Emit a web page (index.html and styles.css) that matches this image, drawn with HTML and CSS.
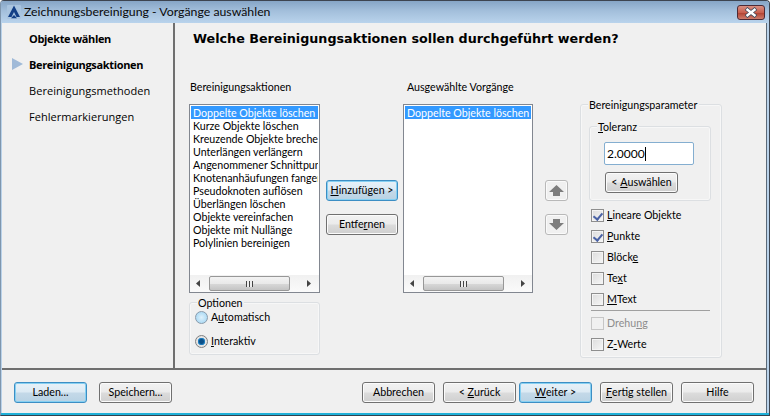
FILE: index.html
```html
<!DOCTYPE html>
<html lang="de">
<head>
<meta charset="utf-8">
<title>Zeichnungsbereinigung - Vorgänge auswählen</title>
<link rel="stylesheet" href="styles.css">
</head>
<body>
<div class="window">
  <header class="titlebar">
    <svg class="app-icon" width="16" height="16" viewBox="0 0 16 16"><rect x="1" y="1" width="14" height="14" rx="1" fill="#a9c4df"/><path d="M8 1.5 14 13H10.5L8 8 5.5 13H2Z" fill="#123f86"/><path d="M5 14.2H11L8 11Z" fill="#123f86"/></svg>
    <span class="title">Zeichnungsbereinigung - Vorgänge auswählen</span>
    <span class="close"><svg width="14" height="11" viewBox="0 0 14 11"><path d="M2 1.5 12 9.5M12 1.5 2 9.5" stroke="#3c4a5c" stroke-width="4"/><path d="M2.5 2 11.5 9M11.5 2 2.5 9" stroke="#fff" stroke-width="2.4"/></svg></span>
  </header>
  <div class="client">
    <div class="content">
      <nav class="nav">
        <div class="step strong">Objekte wählen</div>
        <div class="step strong"><svg class="marker" width="12" height="12" viewBox="0 0 12 12"><path d="M0 0 11 6 0 12Z" fill="#a0bad8"/></svg>Bereinigungsaktionen</div>
        <div class="step">Bereinigungsmethoden</div>
        <div class="step">Fehlermarkierungen</div>
      </nav>
      <main class="main">
        <h1 class="heading">Welche Bereinigungsaktionen sollen durchgeführt werden?</h1>
        <div class="columns">
          <section class="col col-list">
            <div class="col-label">Bereinigungsaktionen</div>
            <div class="listbox">
              <ul class="items">
                <li class="selected">Doppelte Objekte löschen</li>
                <li>Kurze Objekte löschen</li>
                <li>Kreuzende Objekte brechen</li>
                <li>Unterlängen verlängern</li>
                <li>Angenommener Schnittpunkt</li>
                <li>Knotenanhäufungen fangen</li>
                <li>Pseudoknoten auflösen</li>
                <li>Überlängen löschen</li>
                <li>Objekte vereinfachen</li>
                <li>Objekte mit Nullänge</li>
                <li>Polylinien bereinigen</li>
              </ul>
              <div class="hscroll">
                <svg class="arrow" width="5" height="7" viewBox="0 0 5 7"><path d="M4 0V7L0 3.5Z" fill="#444"/></svg>
                <div class="thumb"><span class="grip"></span></div>
                <svg class="arrow" width="5" height="7" viewBox="0 0 5 7"><path d="M1 0V7L5 3.5Z" fill="#444"/></svg>
              </div>
            </div>
            <div class="group options">
              <div class="legend">Optionen</div>
              <label class="radio-row"><span class="radio hot"></span><span class="opt-text">A<u>u</u>tomatisch</span></label>
              <label class="radio-row"><span class="radio on"></span><span class="opt-text"><u>I</u>nteraktiv</span></label>
            </div>
          </section>
          <section class="col col-actions">
            <button class="btn focus"><u>H</u>inzufügen &gt;</button>
            <button class="btn">Entfe<u>r</u>nen</button>
          </section>
          <section class="col col-list2">
            <div class="col-label">Ausgewählte Vorgänge</div>
            <div class="listbox">
              <ul class="items">
                <li class="selected">Doppelte Objekte löschen</li>
              </ul>
              <div class="hscroll">
                <svg class="arrow" width="5" height="7" viewBox="0 0 5 7"><path d="M4 0V7L0 3.5Z" fill="#444"/></svg>
                <div class="thumb"><span class="grip"></span></div>
                <svg class="arrow" width="5" height="7" viewBox="0 0 5 7"><path d="M1 0V7L5 3.5Z" fill="#444"/></svg>
              </div>
            </div>
          </section>
          <section class="col col-move">
            <button class="btn move"><svg width="15" height="11" viewBox="0 0 15 11"><path d="M7.5 0 15 7H11V11H4V7H0Z" fill="#7d7d7d"/></svg></button>
            <button class="btn move"><svg width="15" height="11" viewBox="0 0 15 11"><path d="M7.5 11 15 4H11V0H4V4H0Z" fill="#7d7d7d"/></svg></button>
          </section>
          <section class="col col-params">
            <div class="group params">
              <div class="legend">Bereinigungsparameter</div>
              <div class="group tolerance">
                <div class="legend"><u>T</u>oleranz</div>
                <div class="input"><span>2.0000</span><span class="caret"></span></div>
                <button class="btn pick">&lt; <u>A</u>uswählen</button>
              </div>
              <label class="check-row"><span class="check on"></span><span class="opt-text"><u>L</u>ineare Objekte</span></label>
              <label class="check-row"><span class="check on"></span><span class="opt-text"><u>P</u>unkte</span></label>
              <label class="check-row"><span class="check"></span><span class="opt-text">Blöck<u>e</u></span></label>
              <label class="check-row"><span class="check"></span><span class="opt-text">Te<u>x</u>t</span></label>
              <label class="check-row"><span class="check"></span><span class="opt-text"><u>M</u>Text</span></label>
              <div class="rule"></div>
              <label class="check-row disabled"><span class="check"></span><span class="opt-text">Drehu<u>n</u>g</span></label>
              <label class="check-row"><span class="check"></span><span class="opt-text">Z<u>-</u>Werte</span></label>
            </div>
          </section>
        </div>
      </main>
    </div>
    <footer class="footer">
      <div class="footer-group">
        <button class="btn focus">Laden...</button>
        <button class="btn">Speichern...</button>
      </div>
      <div class="footer-group end">
        <button class="btn">Abbrechen</button>
        <button class="btn">&lt; <u>Z</u>urück</button>
        <button class="btn focus tight"><u>W</u>eiter &gt;</button>
        <button class="btn"><u>F</u>ertig stellen</button>
        <button class="btn">Hilfe</button>
      </div>
    </footer>
  </div>
</div>
</body>
</html>
```
FILE: styles.css
```css
* { box-sizing: border-box; }
html, body { margin: 0; padding: 0; }
body { width: 770px; height: 416px; background: #fff; overflow: hidden; font: 10.66px/13px "Lato", "Liberation Sans", sans-serif; color: #000; }
u { text-decoration: underline; }
.window { width: 770px; height: 416px; display: flex; flex-direction: column; border: 1px solid #3d4450; border-left-color: #7f96ad; border-radius: 4px 4px 0 0; border-bottom-color: #30424f; background: #b9d2ea; overflow: hidden; box-shadow: inset 0 -2px 0 #1fb0d8; }
.titlebar { height: 22px; flex: none; display: flex; align-items: center; padding: 0 4px 0 5px; background: linear-gradient(#86a5c6, #a3bfdb 45%, #b9d3ec); }
.app-icon { flex: none; }
.title { margin-left: 2px; font: 12.3px/16px "Lato", sans-serif; color: #0a0a0a; }
.close { margin-left: auto; width: 28px; height: 15px; border: 1px solid #4e2a35; border-radius: 3px; display: flex; align-items: center; justify-content: center; background: linear-gradient(#d98f82, #c8604f 50%, #b24434 55%, #cf7d6c); }
.client { flex: 1; margin: 0 2px 2px 1px; background: #f0f0f0; display: flex; flex-direction: column; min-height: 0; border-right: 1px solid #5b6a78; }
.content { height: 347px; flex: none; display: flex; border-bottom: 2px solid #6f6f6f; }
.nav { width: 173px; flex: none; border-right: 2px solid #6f6f6f; padding-top: 2px; }
.step { height: 26px; padding-left: 27px; display: flex; align-items: center; font: 500 11px/13px "Open Sans", sans-serif; letter-spacing: 0.05px; color: #000; position: relative; }
.step.strong { font-weight: 700; letter-spacing: -0.35px; }
.marker { position: absolute; left: 10px; top: 7px; }
.main { flex: 1; padding-left: 14px; min-width: 0; background: #f0f0f0; }
.heading { margin: 0; padding: 8px 0 0 4px; height: 56px; font: 700 12.73px/16px "DejaVu Sans", sans-serif; color: #000; white-space: nowrap; }
.columns { display: flex; align-items: flex-start; }
.col-label { height: 25px; padding: 1px 0 0 1px; white-space: nowrap; }
.col-list { width: 131px; }
.col-list2 { width: 130px; margin-left: 5px; }
.col-list2 .col-label { padding-left: 4px; }
.col-actions { width: 72px; margin-left: 6px; padding-top: 101px; display: flex; flex-direction: column; gap: 13px; }
.col-move { width: 23px; margin-left: 12px; padding-top: 101px; display: flex; flex-direction: column; gap: 13px; }
.col-params { width: 142px; margin-left: 12px; padding-top: 25px; }
.listbox { height: 189px; border: 1px solid #828790; background: #fff; display: flex; flex-direction: column; }
.items { flex: 1; list-style: none; margin: 0; padding: 1px; overflow: hidden; white-space: nowrap; }
.items li { height: 13px; padding-left: 2px; overflow: hidden; }
.items li.selected { background: #3399ff; color: #fff; }
.hscroll { height: 17px; flex: none; display: flex; align-items: center; padding-left: 6px; background: linear-gradient(#f1f1f1, #fafafa); }
.thumb { width: 81px; height: 15px; margin: 0 16px 0 8px; flex: none; border: 1px solid #979797; border-radius: 2px; background: linear-gradient(#f3f3f3, #e9e9e9 50%, #d8d8d8 52%, #c4c4c4); display: flex; align-items: center; justify-content: center; }
.grip { width: 7px; height: 6px; background: repeating-linear-gradient(90deg, #444 0 1px, #eee 1px 3px); }
.group { border: 1px solid #dcdfe2; border-radius: 3px; box-shadow: inset 0 0 0 1px #f7f7f7; }
.legend { width: fit-content; margin: -7px 0 0 7px; padding: 0 2px 0 1px; height: 14px; background: #f0f0f0; white-space: nowrap; }
.options { margin-top: 9px; height: 53px; padding: 0; }
.radio-row { display: flex; align-items: center; gap: 3px; height: 12px; margin: 1px 0 0 5px; }
.radio-row + .radio-row { margin-top: 12px; }
.opt-text { padding-bottom: 2px; }
.radio { width: 13px; height: 13px; flex: none; border-radius: 50%; border: 1px solid #8a9bab; background: radial-gradient(circle at 50% 50%, #dff1fb, #b0dcf5 70%, #8ec7ea); }
.radio.on { background: radial-gradient(circle, #0a4f88 0 2px, #2a8ecf 3.5px, #e4e4e4 4px); border-color: #808080; }
.params { height: 254px; }
.tolerance { margin: 14px 0 0 8px; width: 122px; height: 75px; }
.input { margin: 8px 0 0 14px; width: 90px; height: 23px; padding: 0 0 0 1px; border: 1px solid #84aed0; border-radius: 2px; background: #fff; display: flex; align-items: center; font-size: 12px; }
.input span:first-child { padding-left: 1px; }
.caret { width: 1px; height: 14px; background: #000; margin-left: 0; }
.pick { margin: 7px 0 0 15px; width: 73px; height: 21px; }
.check-row { display: flex; align-items: center; gap: 3px; height: 13px; margin: 8px 0 0 10px; }
.check { width: 13px; height: 13px; flex: none; border: 1px solid #8e8e8e; background: linear-gradient(135deg, #dcdcdc, #f6f6f6); box-shadow: inset 0 0 0 1px #f4f4f4; position: relative; }
.check.on::after { content: ""; position: absolute; left: 3px; top: 1px; width: 4px; height: 7px; border: solid #4a62a5; border-width: 0 2px 2px 0; transform: rotate(40deg); }
.rule { height: 1px; background: #a0a0a0; margin: 4px 11px 0 10px; }
.rule + .check-row { margin-top: 6px; }
.disabled { color: #8d8d8d; }
.disabled .check { border-color: #c6c6c6; background: #f0f0f0; box-shadow: none; }
.btn { width: 73px; height: 21px; padding: 0 0 2px; border: 1px solid #707070; border-radius: 3px; background: linear-gradient(#f2f2f2, #ebebeb 48%, #dcdcdc 52%, #cfcfcf); box-shadow: inset 0 0 0 1px #fbfbfb; font: inherit; color: #000; display: flex; align-items: center; justify-content: center; white-space: pre; }
.col-actions .btn { width: 72px; }
.btn.focus { border-color: #3c8ec4; box-shadow: inset 0 0 0 1px #86d0f2; background: linear-gradient(#e7f1f8, #dceaf4 48%, #c4d9e8 52%, #b8d2e4); }
.move { width: 23px; padding: 0; border-color: #b8b8b8; background: #f0f0f0; box-shadow: inset 0 0 0 1px #fafafa; }
.footer { flex: 1; display: flex; justify-content: space-between; padding: 12px 12px 0 12px; }
.footer-group { display: flex; gap: 12px; }
.footer-group.end { gap: 8px; }
.footer-group.end .tight { margin-left: -5px; }
```
